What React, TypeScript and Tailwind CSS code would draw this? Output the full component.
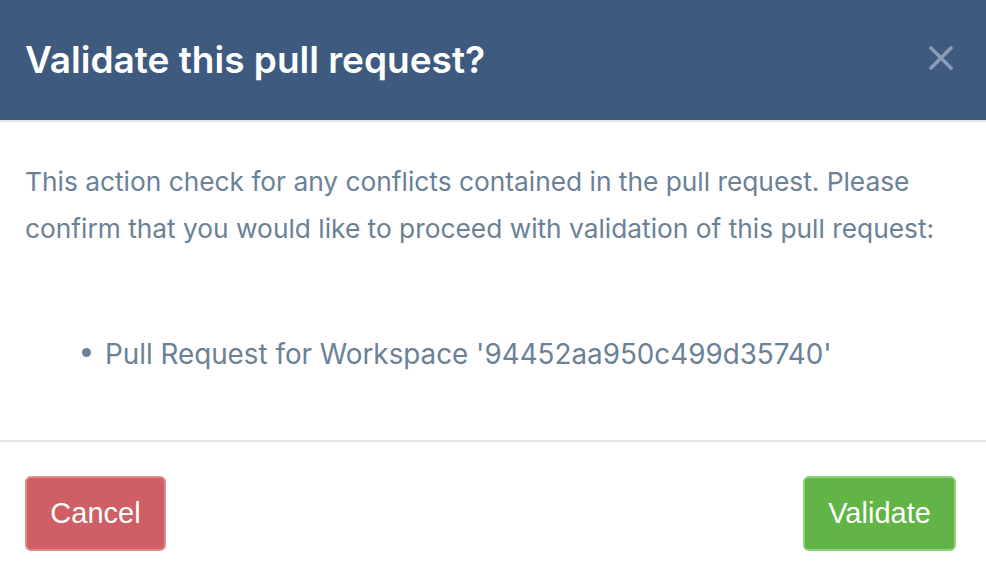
export default function App() {
  return (
    <div className="w-[986px] h-[584px] bg-white overflow-hidden flex flex-col" style={{ fontFamily: "Inter, 'Noto Sans', sans-serif" }}>
      <div className="h-[122px] shrink-0 bg-[#3e5a7e] border-b-2 border-[#e3e7eb] px-[25px] flex items-center justify-between">
        <h1 className="text-[37px] font-semibold text-white leading-none mt-[-2px]">Validate this pull request?</h1>
        <svg width="24" height="24" viewBox="0 0 24 24" className="mr-[8px] mt-[-4px]">
          <path d="M2 2 L22 22 M22 2 L2 22" stroke="#8a9db6" strokeWidth="3.6" strokeLinecap="round" />
        </svg>
      </div>
      <div className="pt-[36px] pb-[62px] px-[25px] text-[#6a8196] leading-[47px]">
        <p className="text-[26.3px]">
          This action check for any conflicts contained in the pull request. Please confirm that you would like to proceed with validation of this pull request:
        </p>
        <ul className="mt-[79px] text-[27.8px]">
          <li className="flex items-center">
            <span className="w-[9px] h-[9px] rounded-full bg-[#6a8196] ml-[57px] mr-[14px] mt-[-4px]" />
            <span>Pull Request for Workspace '94452aa950c499d35740'</span>
          </li>
        </ul>
      </div>
      <div className="border-t-2 border-[#e3e7eb] px-[25px] pt-[34px] flex justify-between" style={{ fontFamily: "'Liberation Sans', Arial, sans-serif" }}>
        <button className="h-[75px] w-[141px] rounded-[6px] bg-[#d05f65] border-2 border-[#e08a8e] text-white text-[29px]">Cancel</button>
        <button className="h-[75px] w-[153px] rounded-[6px] bg-[#62b446] border-2 border-[#8fd07a] text-white text-[29px] mr-[5px]">Validate</button>
      </div>
    </div>
  );
}
